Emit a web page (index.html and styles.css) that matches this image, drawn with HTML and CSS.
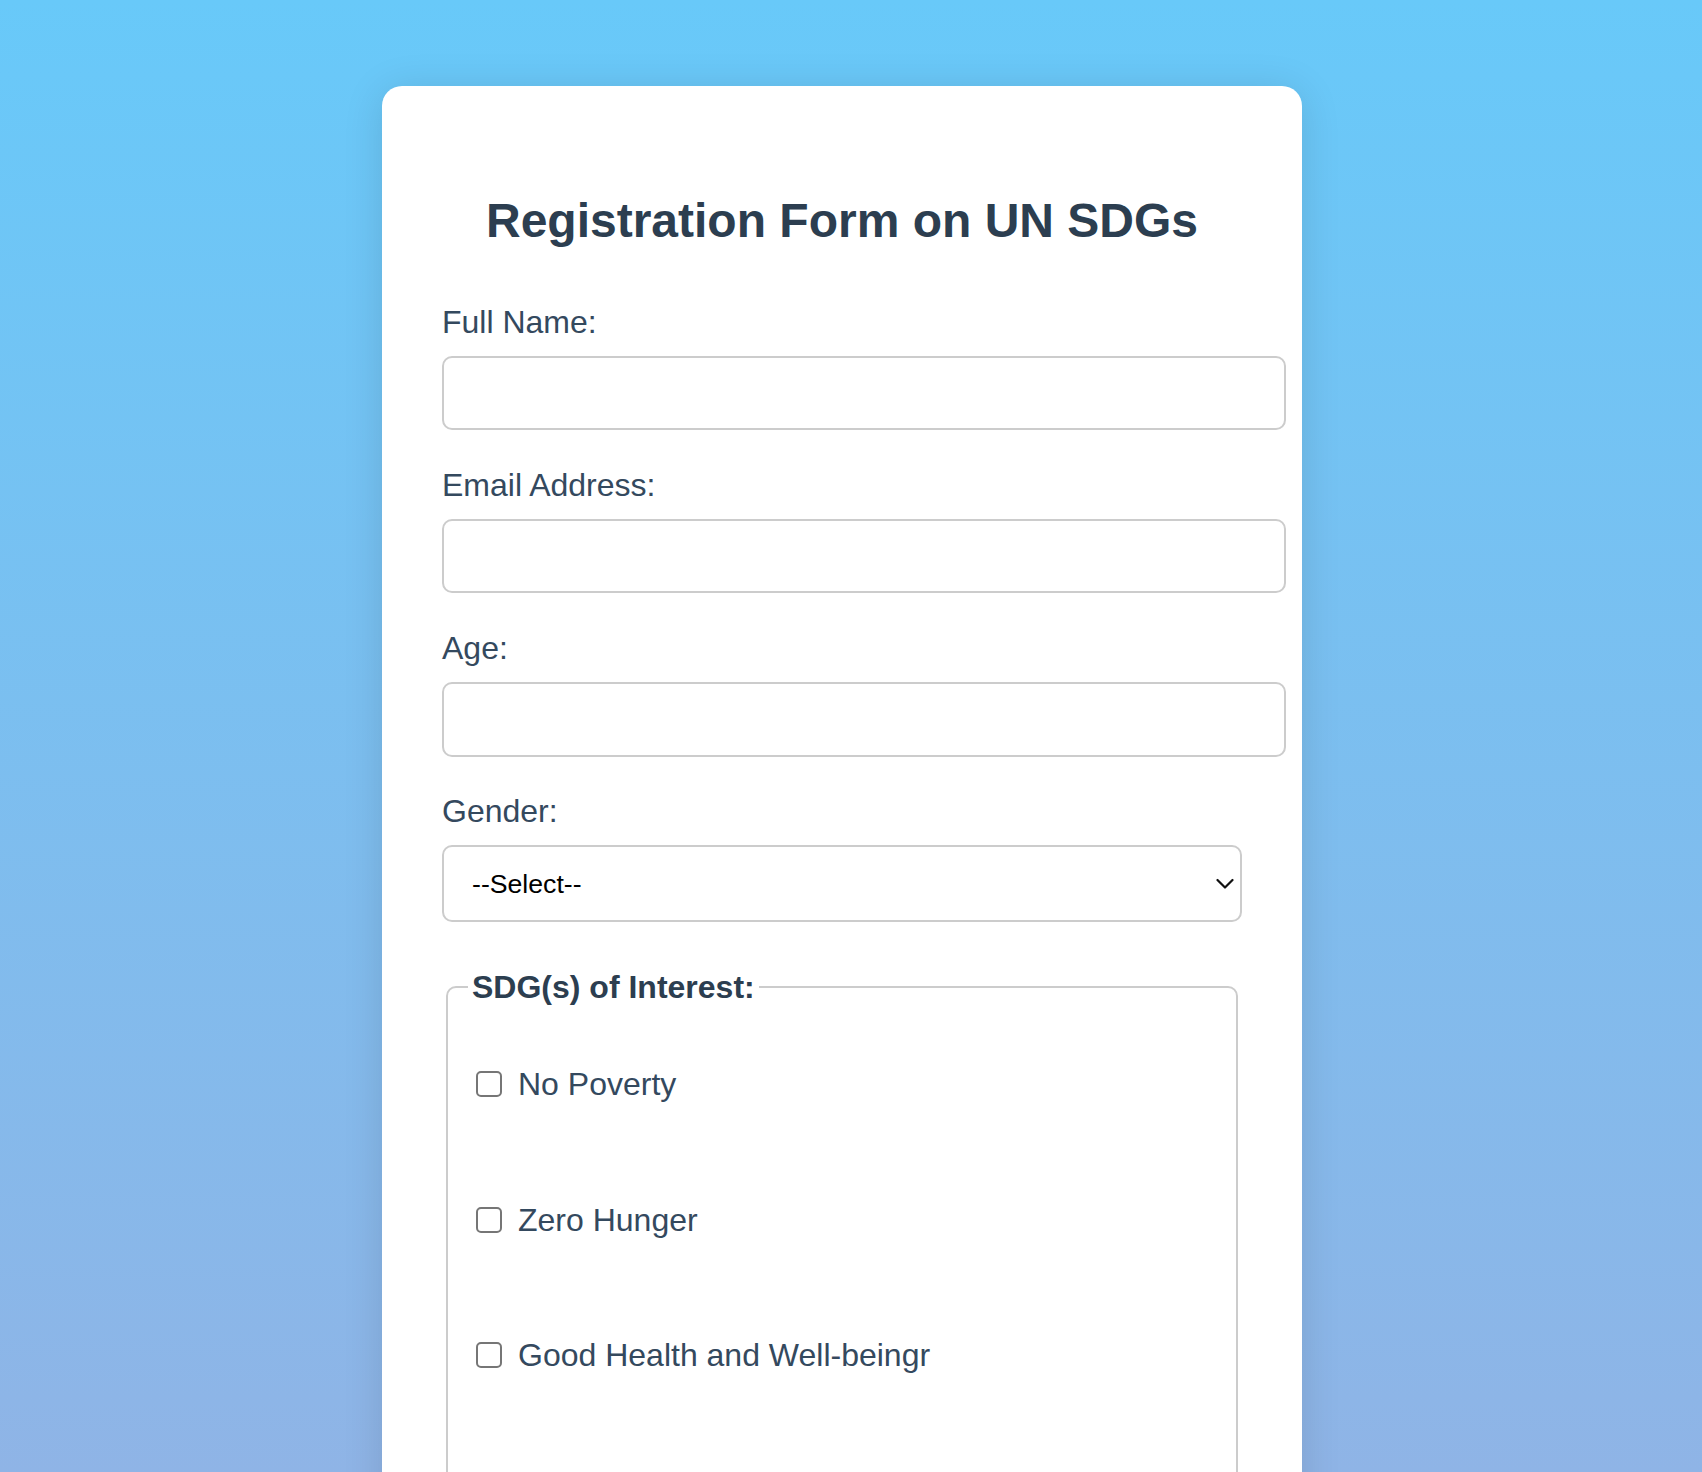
FILE: index.html
```html
<!DOCTYPE html>
<html lang="en">
<head>
<meta charset="utf-8">
<title>Registration Form on UN SDGs</title>
<link rel="stylesheet" href="styles.css">
</head>
<body>
<main class="card">
  <h2 class="title">Registration Form on UN SDGs</h2>
  <form class="form">
    <label class="field-label" for="name">Full Name:</label>
    <input class="text-input" type="text" id="name">

    <label class="field-label" for="email">Email Address:</label>
    <input class="text-input" type="email" id="email">

    <label class="field-label" for="age">Age:</label>
    <input class="text-input" type="number" id="age">

    <label class="field-label" for="gender">Gender:</label>
    <div class="select-wrap">
      <select class="select" id="gender">
        <option>--Select--</option>
        <option>Male</option>
        <option>Female</option>
        <option>Other</option>
      </select>
      <svg class="chevron" width="18" height="11" viewBox="0 0 18 11" aria-hidden="true">
        <polyline points="1.5,1.5 9,9 16.5,1.5" fill="none" stroke="#111" stroke-width="2.2" stroke-linecap="round" stroke-linejoin="round"/>
      </svg>
    </div>

    <fieldset class="sdgs">
      <legend class="legend">SDG(s) of Interest:</legend>
      <label class="option"><input class="check" type="checkbox"><span>No Poverty</span></label>
      <label class="option"><input class="check" type="checkbox"><span>Zero Hunger</span></label>
      <label class="option"><input class="check" type="checkbox"><span>Good Health and Well-beingr</span></label>
    </fieldset>
  </form>
</main>
</body>
</html>
```

FILE: styles.css
```css
html, body {
  margin: 0;
}

body {
  min-height: 100vh;
  padding: 86px 18px 0 0;
  box-sizing: border-box;
  background: linear-gradient(to bottom, #68c9f9 0%, #8fb4e6 100%) fixed;
  font-family: "Liberation Sans", Arial, Helvetica, sans-serif;
}

.card {
  width: 920px;
  box-sizing: border-box;
  margin: 0 auto;
  padding: 60px;
  background: #ffffff;
  border-radius: 20px;
  box-shadow: 0 4px 40px rgba(0, 0, 0, 0.12);
}

.title {
  margin: 47px 0 56.5px;
  font-size: 48px;
  line-height: 56px;
  font-weight: bold;
  color: #2c3e50;
  text-align: center;
}

.form {
  margin: 0;
}

.field-label {
  display: block;
  font-size: 32px;
  line-height: 32px;
  color: #34495e;
  margin-bottom: 18px;
}

.text-input {
  display: block;
  box-sizing: content-box;
  width: 100%;
  height: 30.7px;
  padding: 20px;
  margin: 0 0 38.5px;
  border: 2px solid #cccccc;
  border-radius: 10px;
  background: #fff;
  font-family: "Liberation Sans", Arial, sans-serif;
  font-size: 26.67px;
  outline: none;
}

.select-wrap {
  position: relative;
  width: 100%;
}

.select {
  display: block;
  appearance: none;
  -webkit-appearance: none;
  box-sizing: border-box;
  width: 100%;
  height: 77px;
  padding: 0 40px 0 28px;
  margin: 0;
  border: 2px solid #cccccc;
  border-radius: 10px;
  background: #ffffff;
  color: #000000;
  font-family: "Liberation Sans", Arial, sans-serif;
  font-size: 26.67px;
}

.chevron {
  position: absolute;
  right: 8px;
  top: 50%;
  transform: translateY(-50%);
  pointer-events: none;
}

.sdgs {
  margin: 49px 4px 0;
  padding: 65px 20px 20px;
  border: 2px solid #cccccc;
  border-radius: 10px;
  min-width: 0;
}

.legend {
  padding: 0 4px;
  font-size: 32px;
  line-height: 32px;
  font-weight: bold;
  color: #2c3e50;
}

.option {
  display: flex;
  align-items: center;
  gap: 16px;
  height: 32px;
  margin-bottom: 103.6px;
  font-size: 32px;
  line-height: 32px;
  color: #34495e;
}

.check {
  appearance: none;
  -webkit-appearance: none;
  flex: none;
  width: 26px;
  height: 26px;
  margin: 0 0 0 8px;
  box-sizing: border-box;
  border: 2px solid #767676;
  border-radius: 5px;
  background: #ffffff;
}
```
